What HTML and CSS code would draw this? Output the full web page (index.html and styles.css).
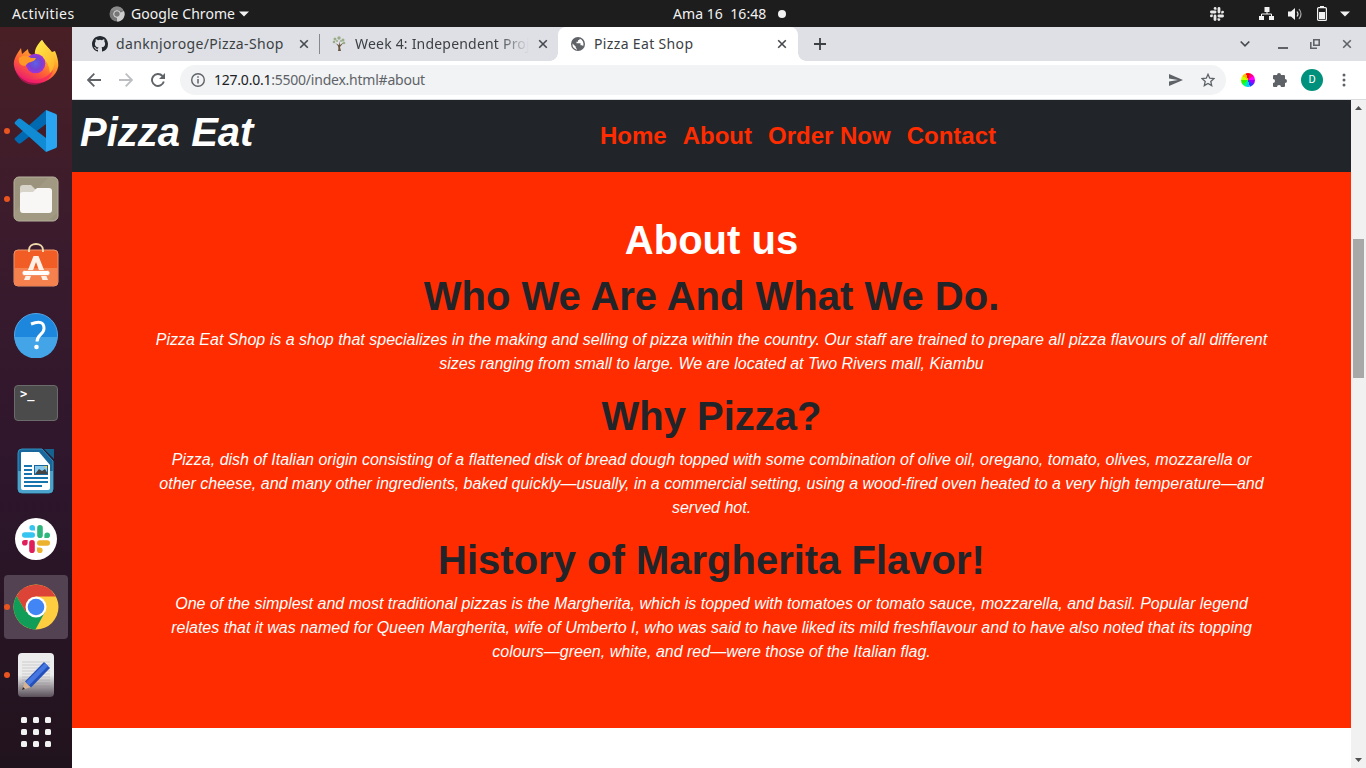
FILE: index.html
```html
<!DOCTYPE html>
<html lang="en">
<head>
<meta charset="utf-8">
<title>Pizza Eat Shop</title>
<link rel="stylesheet" href="styles.css">
</head>
<body>
<svg width="0" height="0" class="defs">
  <defs>
    <linearGradient id="fox" x1=".8" y1="0" x2=".2" y2="1"><stop offset="0" stop-color="#fff44f"/><stop offset=".35" stop-color="#ffa72b"/><stop offset=".65" stop-color="#ff5b38"/><stop offset="1" stop-color="#e5127c"/></linearGradient>
    <radialGradient id="globe"><stop offset="0" stop-color="#5b62e8"/><stop offset=".6" stop-color="#7542cf"/><stop offset="1" stop-color="#a531d8"/></radialGradient>
    <linearGradient id="fade" x2="0" y2="1"><stop offset=".5" stop-color="#ececec"/><stop offset="1" stop-color="#594f59"/></linearGradient>
    <linearGradient id="flame" x1="0" y1="0" x2=".6" y2="1"><stop offset="0" stop-color="#fff04c"/><stop offset="1" stop-color="#ffb62c"/></linearGradient>
    <symbol id="close" viewBox="0 0 10 10"><path d="M1.2 1.2 8.8 8.8M8.8 1.2 1.2 8.8" stroke="currentColor" stroke-width="1.6"/></symbol>
    <symbol id="slack" viewBox="0 0 28 28">
      <g fill="var(--b)"><rect x="0" y="7.2" width="13" height="5.6" rx="2.8"/><path d="M13 5.6h-2.8A2.8 2.8 0 1 1 13 2.8z"/></g>
      <g fill="var(--g)"><rect x="15.2" y="0" width="5.6" height="13" rx="2.8"/><path d="M22.4 13v-2.8a2.8 2.8 0 1 1 2.8 2.8z"/></g>
      <g fill="var(--y)"><rect x="15" y="15.2" width="13" height="5.6" rx="2.8"/><path d="M15 22.4h2.8a2.8 2.8 0 1 1-2.8 2.8z"/></g>
      <g fill="var(--r)"><rect x="7.2" y="15" width="5.6" height="13" rx="2.8"/><path d="M5.6 15v2.8A2.8 2.8 0 1 1 2.8 15z"/></g>
    </symbol>
  </defs>
</svg>
<div class="desktop">
  <header class="topbar">
    <span class="activities">Activities</span>
    <span class="app-menu">
      <svg width="16" height="16" viewBox="0 0 16 16"><circle cx="8" cy="8" r="7.5" fill="#777"/><path d="M8 8 15 5A7.5 7.5 0 0 1 8 15.500z" fill="#ccc"/><path d="M1.400 4.500A7.500 7.500 0 0 1 14.600 4.500H8z" fill="#8b8b8b"/><circle cx="8" cy="8" r="3.300" fill="#777" stroke="#ddd" stroke-width="1"/></svg>
      <span class="app-name">Google Chrome</span>
      <svg width="10" height="6" viewBox="0 0 10 6"><path d="M0 .5h10L5 5.500z" fill="#f2f2f2"/></svg>
    </span>
    <span class="clock"><span>Ama 16&nbsp; 16:48</span><i class="notice"></i></span>
    <span class="status">
      <svg class="slack-mono" width="14" height="14"><use href="#slack"/></svg>
      <svg width="16" height="14" viewBox="0 0 16 14" fill="#f2f2f2"><path d="M5.500 0h5v5h-5zM0 9h5v4H0zM10 9h5v4h-5z"/><path d="M8 4v3M2.500 9.500V7h10v2.500" fill="none" stroke="#f2f2f2"/></svg>
      <svg width="16" height="14" viewBox="0 0 16 14"><path d="M0 4.500h3L7 1v12L3 9.500H0z" fill="#f2f2f2"/><path d="M9 4.500q2 2.500 0 5" fill="none" stroke="#ddd" stroke-width="1.200"/><path d="M11 2q4 5 0 10" fill="none" stroke="#aaa" stroke-width="1.200"/></svg>
      <svg width="10" height="15" viewBox="0 0 10 15"><path d="M3 0h4v2H3z" fill="#f2f2f2"/><rect x=".6" y="1.600" width="8.800" height="12.800" rx="1" fill="none" stroke="#f2f2f2" stroke-width="1.200"/><path d="M2 6h6v7H2z" fill="#f2f2f2"/></svg>
      <svg width="10" height="6" viewBox="0 0 10 6"><path d="M0 .5h10L5 5.500z" fill="#f2f2f2"/></svg>
    </span>
  </header>

  <div class="workspace">
    <nav class="dock">
      <div class="launcher"><svg width="46" height="48" viewBox="0 0 46 48"><path d="M1 27C0 20 4 15 8 9l1 6 6-5c0 3 1 5 4 6h7C21 11 25 5 29 1c3 5 7 8 10 12l3-1c2 5 3.500 9 3.300 15A22.400 20 0 0 1 1 27z" fill="url(#fox)"/><path d="M22 16C21 10 25 5 29 1c3 5 7 8 10 13 4 7 3 15-2 20-1-9-4-16-15-18z" fill="url(#flame)"/><circle cx="22.500" cy="24.500" r="9.800" fill="url(#globe)"/><path d="M6 19q6-5 12 0h5c-1 3-5 4-8 5l-3 3c-5 0-7-4-6-8z" fill="#ff9827"/><path d="M3 33q7 8 17 8c9 0 16-4 20-10-3 16-29 22-37 2z" fill="#f5156c" opacity=".55"/></svg></div>
      <div class="launcher running"><svg width="44" height="44" viewBox="0 0 44 44"><path d="M1 29 32 1v14L7 34q-2 1-3 0l-3-3q-1-1 0-2z" fill="#0069b0"/><path d="M1 15q-1-1 0-2l3-3q1-1 3 0l25 19v14z" fill="#118bd3"/><path d="m32 1 10 4q1 .5 1 2v30q0 1.500-1 2l-10 4z" fill="#2aa5f2"/></svg></div>
      <div class="launcher running"><svg width="46" height="46" viewBox="0 0 46 46"><rect x="1" y="1" width="44" height="44" rx="5" fill="#9b937c" stroke="#b8b29f"/><path d="M2 35 35 2h6q3 0 3 3v32L36 44H6q-4 0-4-4z" fill="#aaa28c" opacity=".4"/><path d="M7 12q0-3 3-3h8l4 4h15v8H7z" fill="#d8d4c9"/><path d="M7 18q0-2 3-2h10l4-4h12q3 0 3 3v19q0 3-3 3H10q-3 0-3-3z" fill="#f8f7f5"/></svg></div>
      <div class="launcher store"><svg width="46" height="46" viewBox="0 0 46 46"><rect x="1" y="8" width="44" height="36" rx="4" fill="#f15d24" stroke="#e99770"/><path d="M1.500 26h43v14q0 3.500-3 3.500h-37q-3 0-3-3.500z" fill="#f5814f"/><path d="M16 10V8C16 0 30 0 30 8v2" fill="none" stroke="#eed8ab" stroke-width="2"/><path d="M20.500 14 11 38h5.500L23 20l6.500 18H35l-9.500-24z" fill="#fff0e7"/><rect x="9" y="28.500" width="28" height="5" rx="2.500" fill="#fff" stroke="#f5814f" stroke-width=".8"/></svg></div>
      <div class="launcher"><svg width="46" height="46" viewBox="0 0 46 46"><circle cx="23" cy="23" r="21.500" fill="#1c87dc" stroke="#55a5e6"/><path d="M1.500 25a21.500 21.500 0 0 0 43 0z" fill="#44a4e8"/><path d="M18 12q13-5 13 4.500c0 6-7 6-7 13" fill="none" stroke="#fff" stroke-width="3"/><circle cx="23.500" cy="35" r="2.300" fill="#fff"/></svg></div>
      <div class="launcher"><div class="terminal">&gt;_</div></div>
      <div class="launcher"><svg width="38" height="46" viewBox="0 0 38 46"><path d="M5 1h20l11 12v28q0 4-4 4H5q-4 0-4-4V5q0-4 4-4z" fill="#19689d" stroke="#2f91bf"/><path d="M1 23h35v18q0 4-4 4H5q-4 0-4-4z" fill="#4ba3cb"/><path d="M4 5q0-1 1-1h17l11 13v23q0 2-2 2H6q-2 0-2-2z" fill="#fff"/><path d="M27 1h10v10z" fill="#16628e"/><path d="M7 18h8M7 22h8M7 26h8M7 30h24M7 34h24M7 38h18" stroke="#1775ae" stroke-width="2"/><rect x="17.500" y="17.500" width="13" height="9" fill="#87c9ec" stroke="#1b6898"/><path d="m18 26 4-5 3 2 3-2 3 5z" fill="#444"/><path d="M27 18h3v3z" fill="#f4ce45"/></svg></div>
      <div class="launcher"><div class="slack-disc"><svg width="28" height="28"><use href="#slack"/></svg></div></div>
      <div class="launcher running active"><svg width="46" height="46" viewBox="0 0 46 46"><circle cx="23" cy="23" r="22.500" fill="#ffcd40"/><path d="M3.500 12A22.500 22.500 0 0 1 42.700 12.500H23L12.900 28z" fill="#db4437"/><path d="M3.500 12A22.500 22.500 0 0 0 22.500 45.500L32 28H13z" fill="#0f9d58"/><circle cx="23" cy="23" r="10.500" fill="#fff"/><circle cx="23" cy="23" r="8.300" fill="#4285f4"/></svg></div>
      <div class="launcher running"><svg width="38" height="46" viewBox="0 0 38 46"><rect x="1" y="1" width="36" height="44" rx="4" fill="url(#fade)"/><path d="M5 10h28M5 13h28M5 16h28M5 19h28M5 22h28M5 25h28M5 28h28M5 31h28M5 34h28" stroke="#777" stroke-width=".7" opacity=".4"/><path d="m5 38 3-9 6 6z" fill="#d6b295"/><path d="M8 29.500 27 10l6 6-19 19.500z" fill="#2450bb"/><path d="M9 30 28 11l3 3-19 19.500z" fill="#4676e0"/><path d="m5 38 1-3 2 2z" fill="#222"/></svg></div>
      <div class="apps"><i></i><i></i><i></i><i></i><i></i><i></i><i></i><i></i><i></i></div>
    </nav>

    <main class="browser">
      <div class="tabs">
        <div class="tab first">
          <svg width="16" height="16" viewBox="0 0 16 16"><path fill="#24292f" d="M8 0C3.580 0 0 3.580 0 8c0 3.540 2.290 6.530 5.470 7.590.4.070.55-.17.55-.38 0-.19-.01-.82-.01-1.490-2.010.37-2.530-.49-2.690-.94-.09-.23-.48-.94-.82-1.130-.28-.15-.68-.52-.01-.53.63-.01 1.080.58 1.230.82.72 1.210 1.870.87 2.330.66.07-.52.28-.87.51-1.070-1.780-.2-3.640-.89-3.640-3.950 0-.87.310-1.590.82-2.150-.08-.2-.36-1.020.08-2.120 0 0 .67-.21 2.200.82a7.600 7.600 0 0 1 4 0c1.530-1.040 2.200-.82 2.200-.82.440 1.100.16 1.920.08 2.120.51.560.82 1.270.82 2.150 0 3.070-1.870 3.750-3.650 3.950.29.250.54.730.54 1.480 0 1.070-.01 1.930-.01 2.200 0 .21.150.46.550.38A8 8 0 0 0 16 8c0-4.420-3.580-8-8-8z"/></svg>
          <span class="tab-title t1">danknjoroge/Pizza-Shop</span>
          <svg class="x" width="10" height="10"><use href="#close"/></svg>
        </div>
        <div class="tab second">
          <svg width="14" height="16" viewBox="0 0 14 16"><path d="M6 15c1-4 0-6-3-8l4 2V5l1 4 4-3-4 5 1 4z" fill="#6a563f"/><g fill="#9cac88"><circle cx="3" cy="3" r="1.500"/><circle cx="7" cy="2" r="1.700"/><circle cx="11" cy="4" r="1.500"/><circle cx="2" cy="6" r="1.300"/><circle cx="12" cy="7" r="1.300"/><circle cx="5" cy="5" r="1"/><circle cx="9" cy="5" r="1"/></g></svg>
          <span class="tab-title t2">Week 4: Independent Proj</span>
          <svg class="x" width="10" height="10"><use href="#close"/></svg>
        </div>
        <div class="tab current">
          <svg width="14" height="14" viewBox="0 0 14 14"><circle cx="7" cy="7" r="7" fill="#5f6368"/><path d="M8.800 1.800q-.3 1.500-1.800 1.500v1.500H5.500v1.400h4v2h1.300q1 0 1.300 1Q13 7 12 4.700T8.800 1.800zM1.500 6.500l3.300 3.200v1q0 1 1.200 1v1Q1 11.500 1.500 6.500z" fill="#fff"/></svg>
          <span class="tab-title t3">Pizza Eat Shop</span>
          <svg class="x" width="10" height="10"><use href="#close"/></svg>
        </div>
        <svg class="new-tab" width="12" height="12" viewBox="0 0 12 12"><path d="M6 0v12M0 6h12" stroke="#3c4043" stroke-width="1.800"/></svg>
        <div class="window-controls">
          <svg width="10" height="8" viewBox="0 0 10 8"><path d="m.7 1.500 4.300 4.300 4.300-4.300" fill="none" stroke="#46494d" stroke-width="1.700"/></svg>
          <svg width="10" height="10" viewBox="0 0 10 10"><path d="M0 9h10" stroke="#5f6368" stroke-width="2"/></svg>
          <svg width="10" height="10" viewBox="0 0 10 10"><path d="M3.800.8h5.400v5.400H3.800zM.8 3v6.200H7" fill="none" stroke="#5f6368" stroke-width="1.600"/></svg>
          <svg width="10" height="10"><use href="#close"/></svg>
        </div>
      </div>
      <div class="toolbar">
        <svg class="back" width="14" height="14" viewBox="0 0 14 14"><path d="M14 7H1M7.300.7 1 7l6.300 6.300" fill="none" stroke="#5f6368" stroke-width="1.800"/></svg>
        <svg class="forward" width="14" height="14" viewBox="0 0 14 14"><path d="M0 7h13M6.700.7 13 7l-6.300 6.300" fill="none" stroke="#bcbec1" stroke-width="1.800"/></svg>
        <svg class="reload" width="14" height="14" viewBox="0 0 14 14"><path d="M12.800 8.500A6 6 0 1 1 11.500 3" fill="none" stroke="#5f6368" stroke-width="1.900"/><path d="M14 0v6H8z" fill="#5f6368"/></svg>
        <div class="omnibox">
          <svg width="14" height="14" viewBox="0 0 14 14"><circle cx="7" cy="7" r="6.300" fill="none" stroke="#5f6368" stroke-width="1.400"/><path d="M7 6v4.500M7 3.300v1.500" stroke="#5f6368" stroke-width="1.500"/></svg>
          <span class="url"><b>127.0.0.1</b>:5500/index.html#about</span>
          <svg class="send" width="14" height="12" viewBox="0 0 14 12"><path d="M0 0 14 6 0 12V7.500L9 6 0 4.500z" fill="#5f6368"/></svg>
          <svg class="star" width="14" height="14" viewBox="0 0 14 14"><path d="m7 1.300 1.700 3.900 4.300.4-3.200 2.800.9 4.200L7 10.400l-3.700 2.200.9-4.200L1 5.600l4.300-.4z" fill="none" stroke="#5f6368" stroke-width="1.300"/></svg>
        </div>
        <span class="wheel"></span>
        <svg class="puzzle" width="15" height="15" viewBox="0 0 15 15"><path d="M1 4q0-1 1-1h3a2 2 0 1 1 4 0h3q1 0 1 1v3a2 2 0 1 1 0 4v3q0 1-1 1H9a2 2 0 0 0-4 0H2q-1 0-1-1v-3a2 2 0 0 0 0-4z" fill="#5f6368"/></svg>
        <span class="avatar">D</span>
        <svg class="more" width="4" height="14" viewBox="0 0 4 14" fill="#5f6368"><circle cx="2" cy="2" r="1.500"/><circle cx="2" cy="7" r="1.500"/><circle cx="2" cy="12" r="1.500"/></svg>
      </div>
      <div class="viewport">
        <div class="page">
          <header class="site-header">
            <h1 class="brand">Pizza Eat</h1>
            <nav class="site-nav"><a>Home</a><a>About</a><a>Order Now</a><a>Contact</a></nav>
          </header>
          <section class="about">
            <h2 class="title light">About us</h2>
            <h2 class="title">Who We Are And What We Do.</h2>
            <p class="copy">Pizza Eat Shop is a shop that specializes in the making and selling of pizza within the country. Our staff are trained to prepare all pizza flavours of all different sizes ranging from small to large. We are located at Two Rivers mall, Kiambu</p>
            <h2 class="title">Why Pizza?</h2>
            <p class="copy">Pizza, dish of Italian origin consisting of a flattened disk of bread dough topped with some combination of olive oil, oregano, tomato, olives, mozzarella or other cheese, and many other ingredients, baked quickly—usually, in a commercial setting, using a wood-fired oven heated to a very high temperature—and served hot.</p>
            <h2 class="title">History of Margherita Flavor!</h2>
            <p class="copy">One of the simplest and most traditional pizzas is the Margherita, which is topped with tomatoes or tomato sauce, mozzarella, and basil. Popular legend relates that it was named for Queen Margherita, wife of Umberto I, who was said to have liked its mild freshflavour and to have also noted that its topping colours—green, white, and red—were those of the Italian flag.</p>
          </section>
        </div>
        <div class="scrollbar">
          <svg width="7" height="4" viewBox="0 0 7 4"><path d="M0 4 3.500 0 7 4z" fill="#505050"/></svg>
          <div class="track"><div class="thumb"></div></div>
          <svg width="7" height="4" viewBox="0 0 7 4"><path d="M0 0h7L3.500 4z" fill="#505050"/></svg>
        </div>
      </div>
    </main>
  </div>
</div>
</body>
</html>
```
FILE: styles.css
```css
* { box-sizing: border-box; }
body { margin: 0; overflow: hidden; font-family: "Noto Sans", sans-serif; }
svg { display: block; flex: none; }
.defs { position: absolute; }
.desktop { width: 1366px; height: 768px; display: flex; flex-direction: column; overflow: hidden; }

.topbar { height: 27px; flex: none; background: #1d1d1d; color: #f2f2f2; display: grid; grid-template-columns: 109px 564px 1fr auto; align-items: center; font-size: 14px; line-height: 26px; white-space: nowrap; }
.activities { padding-left: 12px; letter-spacing: .42px; }
.app-menu, .clock, .status { display: flex; align-items: center; }
.app-name { margin: 0 4px 0 6px; letter-spacing: .05px; }
.clock { letter-spacing: .06px; }
.notice { width: 8px; height: 8px; border-radius: 50%; background: #f2f2f2; margin-left: 12px; }
.status { padding-right: 16px; }
.status svg { margin-left: 13px; }
.status svg:nth-child(2) { margin-left: 35px; }
.slack-mono { --b: #e8e8e8; --g: #e8e8e8; --y: #e8e8e8; --r: #e8e8e8; }

.workspace { flex: 1; display: flex; min-height: 0; }
.dock { width: 72px; flex: none; padding-top: 4px; display: flex; flex-direction: column; align-items: center; gap: 4px; background: linear-gradient(#491f25, #3a1b2d 30%, #2e162c 60%, #21131d); }
.launcher { width: 64px; height: 64px; flex: none; display: grid; place-items: center; border-radius: 4px; position: relative; }
.launcher.store { padding-bottom: 4px; }
.launcher.active { background: #524252; }
.launcher.running::before { content: ""; position: absolute; left: 0; top: 29px; width: 6px; height: 6px; border-radius: 50%; background: #e95420; }
.terminal { width: 44px; height: 36px; border-radius: 4px; background: #4b4b4b; border: 1px solid #6b6b6b; color: #fff; font: bold 12px/14px "DejaVu Sans Mono", monospace; padding: 1px 5px; }
.slack-disc { width: 42px; height: 42px; border-radius: 50%; background: #fff; display: grid; place-items: center; --b: #36c5f0; --g: #2eb67d; --y: #ecb22e; --r: #e01e5a; }
.apps { margin-top: 6px; display: grid; grid-template-columns: repeat(3, 6px); gap: 6px; }
.apps i { width: 6px; height: 6px; border-radius: 1.500px; background: #f2f2f2; }

.browser { flex: 1; min-width: 0; display: flex; flex-direction: column; background: #fff; }
.tabs { height: 34px; flex: none; display: flex; align-items: center; background: #dee0e6; color: #3c4043; }
.tab { height: 34px; display: flex; align-items: center; font-size: 14px; }
.first { width: 248px; padding: 0 11px 0 20px; border-right: 0; position: relative; }
.first::after { content: ""; position: absolute; right: 0; top: 7px; width: 1px; height: 20px; background: #85888c; }
.second { width: 238px; padding: 0 10px 0 12px; }
.current { width: 240px; padding: 0 11px 0 13px; background: #fff; border-radius: 8px 8px 0 0; position: relative; }
.current::before, .current::after { content: ""; position: absolute; bottom: 0; width: 8px; height: 8px; }
.current::before { left: -8px; background: radial-gradient(circle at 0 0, transparent 7.500px, #fff 8px); }
.current::after { right: -8px; background: radial-gradient(circle at 100% 0, transparent 7.500px, #fff 8px); }
.tab-title { margin-left: 8px; padding-bottom: 2px; letter-spacing: .35px; white-space: nowrap; overflow: hidden; }
.t2 { width: 174px; margin-left: 9px; letter-spacing: .2px; -webkit-mask-image: linear-gradient(90deg, #000 82%, transparent); }
.t3 { margin-left: 9px; }
.x { margin-left: auto; color: #46494d; }
.new-tab { margin-left: 16px; }
.window-controls { margin-left: auto; display: flex; align-items: center; color: #5f6368; padding-right: 14px; gap: 22px; }
.window-controls svg:first-child { margin-right: 6px; }

.toolbar { height: 39px; flex: none; padding: 0 20px 1px 15px; display: flex; align-items: center; background: #fff; border-bottom: 1px solid #dadce0; }
.forward { margin-left: 18px; }
.reload { margin-left: 18px; }
.omnibox { width: 1046px; height: 30px; border-radius: 15px; margin-left: 15px; padding: 0 11px; display: flex; align-items: center; background: #f1f3f4; }
.url { margin-left: 9px; font-size: 14px; letter-spacing: -.23px; color: #5f6368; white-space: nowrap; }
.url b { font-weight: 400; color: #202124; }
.send { margin-left: auto; }
.star { margin-left: 18px; }
.wheel { width: 14px; height: 14px; margin-left: 15px; border-radius: 50%; background: conic-gradient(from -18deg, #f00 0 36deg, #f08 0 72deg, #f0f 0 108deg, #90f 0 144deg, #33f 0 180deg, #0cf 0 216deg, #0f6 0 252deg, #3e0 0 288deg, #cf0 0 324deg, #fb0 0); }
.puzzle { margin-left: 17px; }
.avatar { width: 22px; height: 22px; border-radius: 50%; margin-left: 14px; background: #00917c; color: #fff; font: 11px/22px Roboto, sans-serif; text-align: center; }
.more { margin-left: auto; }

.viewport { flex: 1; display: flex; min-height: 0; }
.page { flex: 1; font-family: "Liberation Sans", Arial, sans-serif; background: #fff; }
.site-header { height: 72px; padding: 8px; background: #212529; display: flex; }
.brand { width: 520px; margin: 0; color: #fff; font-size: 40px; line-height: 48px; font-style: italic; }
.site-nav { display: flex; gap: 16px; padding-top: 10px; color: #ff2c00; font-size: 24px; line-height: 36px; font-weight: 700; }
.about { height: 556px; padding: 44px 81.500px 0; background: #ff2c00; text-align: center; }
.title { margin: 0 0 8px; color: #212529; font-size: 40px; line-height: 48px; }
.title.light { color: #fff; }
.copy { margin: 0 0 16px; color: #fff; font-size: 16px; line-height: 24px; font-style: italic; }
.scrollbar { width: 15px; flex: none; padding: 6px 0; background: #f1f1f1; display: flex; flex-direction: column; align-items: center; }
.track { flex: 1; width: 11px; padding-top: 129px; }
.thumb { height: 139px; background: #a8a8a8; }
```
